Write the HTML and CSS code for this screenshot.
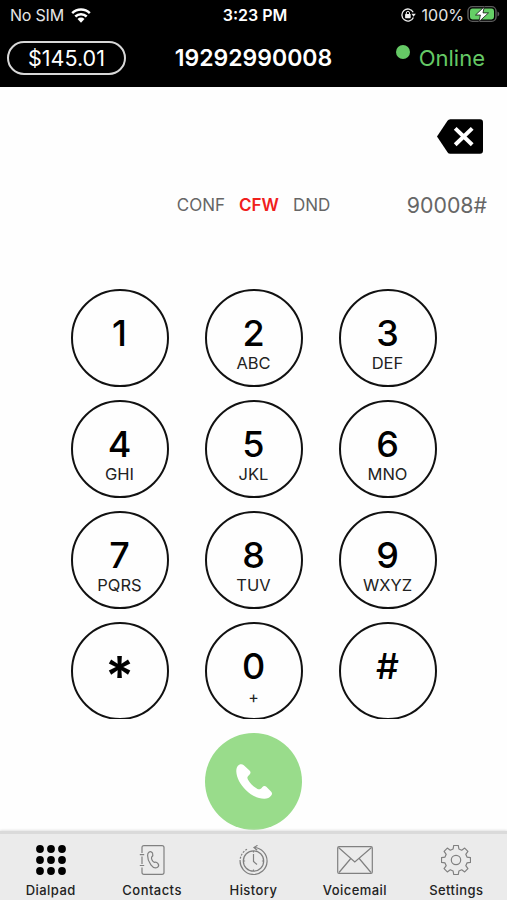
FILE: index.html
```html
<!DOCTYPE html>
<html lang="en">
<head>
  <meta charset="UTF-8">
  <meta name="viewport" content="width=device-width, initial-scale=1.0">
  <title>Dialpad</title>
  <link rel="stylesheet" href="styles.css">
</head>
<body>
  <div class="phone">
    <header class="header">
      <div class="status-bar">
        <div class="status-left">
          <span class="carrier">No SIM</span>
          <svg class="wifi" width="20" height="15" viewBox="0 0 20 15">
            <path d="M1.2 5.2a12.6 12.6 0 0 1 17.6 0M4.3 8.5a8.2 8.2 0 0 1 11.4 0" fill="none" stroke="#fff" stroke-width="2.5"/>
            <path d="M6.5 11a5 5 0 0 1 7 0L10 14.7z" fill="#fff"/>
          </svg>
        </div>
        <div class="clock">3:23 PM</div>
        <div class="status-right">
          <svg class="lock" width="15" height="14" viewBox="0 0 15 14">
            <path d="M12.2 4.2A6 6 0 1 0 12.4 9.4" fill="none" stroke="#eee" stroke-width="1.3"/>
            <path d="M10.4 5.8h4.4l-2.2 3z" fill="#eee"/>
            <rect x="4.1" y="6" width="5.600" height="4.200" rx=".6" fill="#eee"/>
            <path d="M5.300 6.5V5a1.6 1.6 0 0 1 3.2 0v1.5" fill="none" stroke="#eee" stroke-width="1"/>
          </svg>
          <span class="percent">100%</span>
          <svg class="battery" width="33" height="18" viewBox="0 0 33 18">
            <rect x="1" y="1.6" width="28" height="14.8" rx="4.4" fill="none" stroke="#5c5c5c" stroke-width="1.4"/>
            <rect x="3" y="3.6" width="24" height="10.8" rx="2.4" fill="#65cf66"/>
            <path d="M30.500 6.5q1.8.6 1.8 2.5t-1.800 2.500z" fill="#5c5c5c"/>
            <path d="M17.300 1.700L8.500 10h4.900l-1.500 6.800 9.600-8.900h-5.500z" fill="#fff" stroke="#111" stroke-width=".8"/>
          </svg>
        </div>
      </div>
      <div class="account-bar">
        <div class="balance">$145.01</div>
        <div class="number">19292990008</div>
        <div class="presence"><i class="dot"></i><span>Online</span></div>
      </div>
    </header>

    <main class="dialer">
      <div class="entry">
        <svg class="backspace" width="46" height="35" viewBox="0 0 46 35">
          <path d="M0 17.500L10.500 1.700Q11.500.2 13.300.2H43q3 0 3 3v28.600q0 3-3 3H13.300q-1.800 0-2.800-1.500z"/>
          <path d="M18.200 9.400l17 16.400M35.200 9.400l-17 16.400" stroke="#fff" stroke-width="4"/>
        </svg>
      </div>

      <div class="modes">
        <div class="flags">
          <span class="conf">CONF</span>
          <span class="cfw">CFW</span>
          <span class="dnd">DND</span>
        </div>
        <span class="extension">90008#</span>
      </div>

      <div class="keypad">
        <div class="key"><b>1</b></div>
        <div class="key"><b>2</b><small>ABC</small></div>
        <div class="key"><b>3</b><small>DEF</small></div>
        <div class="key"><b>4</b><small>GHI</small></div>
        <div class="key"><b>5</b><small>JKL</small></div>
        <div class="key"><b>6</b><small>MNO</small></div>
        <div class="key"><b>7</b><small>PQRS</small></div>
        <div class="key"><b>8</b><small>TUV</small></div>
        <div class="key"><b>9</b><small>WXYZ</small></div>
        <div class="key"><b class="star">*</b></div>
        <div class="key"><b>0</b><small class="plus">+</small></div>
        <div class="key"><b>#</b></div>
      </div>

      <div class="call">
        <svg width="36" height="36" viewBox="0 0 36 36">
          <path d="M3.200.8C5 0 6.400.2 7.800 1.300l5.700 5.300c1.500 1.500 1.300 2.900-.3 4.300-1.800 1.500-2.300 2.600-1.300 4.700 2.200 4.200 5.200 7.100 9.600 9.300 2 1 3.200.3 4.700-1.600 1.300-1.600 2.700-1.900 4.100-.6l4.700 4.800c1.300 1.300 1.300 2.600.2 4-1.600 2.200-4.200 3.400-7.100 3.300C22 34.700 15.500 31.500 9.800 25.900 4.100 20.200.6 13.700.3 7.500.2 4.300 1.100 2 3.200.8z" fill="#fff"/>
        </svg>
      </div>
    </main>

    <nav class="tabs">
      <a class="tab active">
        <svg width="30" height="30" viewBox="0 0 30 30">
          <circle cx="4" cy="4" r="3.900"/><circle cx="15" cy="4" r="3.900"/><circle cx="26" cy="4" r="3.900"/>
          <circle cx="4" cy="15" r="3.900"/><circle cx="15" cy="15" r="3.900"/><circle cx="26" cy="15" r="3.900"/>
          <circle cx="4" cy="26" r="3.900"/><circle cx="15" cy="26" r="3.900"/><circle cx="26" cy="26" r="3.900"/>
        </svg>
        <span>Dialpad</span>
      </a>
      <a class="tab">
        <svg width="30" height="30" viewBox="0 0 30 30">
          <path d="M5 8V2.500Q5 .6 7 .6h18q2 0 2 2v25q0 1.800-2 1.800H7q-2 0-2-2V22.500M5 11.500v7.500M2.800 9.600h4.400M2.800 20.500h4.400"/>
          <path d="M11.900 7.300c1.400-1.100 3.200-.5 3.700 1 .6 1.600.2 2.900-1 3.900-.5 1.700.8 4.300 2.500 5.100 1.700-.5 2.900 0 3.900 1.300.9 1.300.8 2.700-.4 3.600-2.200 1.300-4.700.3-6.700-2.400-2.200-3-3.400-6.300-3.300-9.400 0-1.400.4-2.400 1.300-3.100z"/>
        </svg>
        <span>Contacts</span>
      </a>
      <a class="tab">
        <svg width="30" height="30" viewBox="0 0 30 30">
          <circle cx="15.500" cy="16" r="10.200"/>
          <path d="M16 2.500A13.500 13.500 0 1 1 2.100 15M19.500.3L16 2.600l3.200 2.700"/>
          <path d="M9 4.200A13.500 13.500 0 0 0 2.100 15" stroke-dasharray="2 1.300"/>
          <path d="M15.500 9v7.500l3.500 3M15.500 6v1.600M15.500 24.400V26M5.500 16h1.600M23.900 16h1.600"/>
        </svg>
        <span>History</span>
      </a>
      <a class="tab">
        <svg width="36" height="30" viewBox="0 0 36 30">
          <rect x=".7" y="1.700" width="34.600" height="26.600" rx="1.300"/>
          <path d="M1.500 2.500L17.800 17 34.500 2.500M2 27.500l11.800-14M34 27.500l-11.800-14"/>
        </svg>
        <span>Voicemail</span>
      </a>
      <a class="tab">
        <svg width="30" height="30" viewBox="-15 -15 30 30">
          <path stroke-linejoin="round" d="M-2.900-11L-2.300-14.500H2.300L2.900-11 5.700-9.800 8.700-11.900 11.900-8.700 9.800-5.700 11-2.900 14.500-2.300V2.300L11 2.900 9.800 5.700 11.900 8.700 8.700 11.900 5.700 9.800 2.900 11 2.300 14.500H-2.300L-2.900 11-5.700 9.800-8.700 11.900-11.900 8.700-9.800 5.700-11 2.900-14.500 2.300V-2.300L-11-2.900-9.800-5.700-11.900-8.700-8.700-11.900-5.700-9.800z"/>
          <circle cx="0" cy="0" r="4.700"/>
        </svg>
        <span>Settings</span>
      </a>
    </nav>
  </div>
</body>
</html>
```

FILE: styles.css
```css
* {
  box-sizing: border-box;
}

body, html {
  margin: 0;
  padding: 0;
  width: 100%;
  height: 100%;
  font-family: Inter, "Liberation Sans", sans-serif;
}

.phone {
  display: flex;
  flex-direction: column;
  width: 507px;
  height: 900px;
  background-color: #fefefe;
  overflow: hidden;
}

/* header */
.header {
  height: 87px;
  flex: none;
  background-color: #000;
  color: #fff;
}

.status-bar {
  display: grid;
  grid-template-columns: 1fr auto 1fr;
  align-items: center;
  height: 30px;
  padding: 0 7px 0 10px;
  font-size: 16px;
}

.status-left,
.status-right {
  display: flex;
  align-items: center;
  color: #e6e6e6;
}

.carrier {
  letter-spacing: -0.2px;
}

.wifi {
  margin-left: 7px;
}

.clock {
  font-weight: 600;
}

.status-right {
  justify-content: flex-end;
}

.percent {
  margin: 0 3px 0 6px;
}

.battery {
  margin-top: -2px;
}

.account-bar {
  display: grid;
  grid-template-columns: 1fr auto 1fr;
  align-items: center;
  height: 55px;
  padding: 0 7px;
}

.balance {
  width: 119px;
  height: 34px;
  border: 2px solid #d8d8d8;
  border-radius: 17px;
  font-size: 21.5px;
  line-height: 30px;
  text-align: center;
}

.number {
  font-size: 23px;
  font-weight: 600;
}

.presence {
  display: flex;
  justify-content: flex-end;
  padding-right: 15px;
  color: #65c965;
  font-size: 22px;
}

.dot {
  width: 14px;
  height: 14px;
  margin-right: 9px;
  border-radius: 50%;
  background-color: #65c965;
}

/* dialer */
.dialer {
  height: 744px;
  flex: none;
}

.entry {
  display: flex;
  justify-content: flex-end;
  height: 100px;
  padding: 32px 24px 0 0;
}

.modes {
  display: grid;
  grid-template-columns: 1fr auto 1fr;
  align-items: center;
  height: 35px;
  padding-right: 20px;
  padding-left: 20px;
  color: #666;
}

.flags {
  display: flex;
  grid-column: 2;
  gap: 14px;
  font-size: 17px;
}

.cfw {
  color: #f0201c;
  font-weight: 600;
}

.extension {
  font-size: 21.3px;
  text-align: right;
}

.keypad {
  display: grid;
  grid-template-columns: repeat(3, 98px);
  grid-auto-rows: 98px;
  gap: 13px 36px;
  justify-content: center;
  height: 430px;
  margin-top: 67px;
  padding-top: 0.4px;
  overflow: hidden;
}

.key {
  display: flex;
  flex-direction: column;
  align-items: center;
  padding-top: 22px;
  border: 2px solid #111;
  border-radius: 50%;
  color: #000;
}

.key b {
  font-size: 36px;
  font-weight: 500;
  line-height: 41px;
}

.key small {
  color: #222;
  font-size: 16.500px;
  line-height: 18px;
}

.key .star {
  font-size: 54px;
  font-weight: 600;
  line-height: 60px;
}

.key .plus {
  font-size: 16px;
  line-height: 20px;
}

.call {
  display: flex;
  align-items: center;
  justify-content: center;
  width: 97px;
  height: 97px;
  margin: 14px auto 0;
  border-radius: 50%;
  background-color: #99dc8b;
}

/* bottom tabs */
.tabs {
  display: grid;
  grid-template-columns: repeat(5, 1fr);
  height: 69px;
  flex: none;
  border-top: 3px solid #dadada;
  background-color: #ebebeb;
  box-shadow: 0 -1px 2px #e4e4e4;
}

.tab {
  display: flex;
  flex-direction: column;
  align-items: center;
  padding-top: 11px;
  color: #222;
  font-size: 13px;
  font-weight: 500;
  letter-spacing: 0.45px;
}

.tab svg {
  fill: none;
  stroke: #808080;
  stroke-width: 1.2;
  margin-bottom: 7px;
}

.tab.active svg {
  fill: #000;
  stroke: none;
}
```
